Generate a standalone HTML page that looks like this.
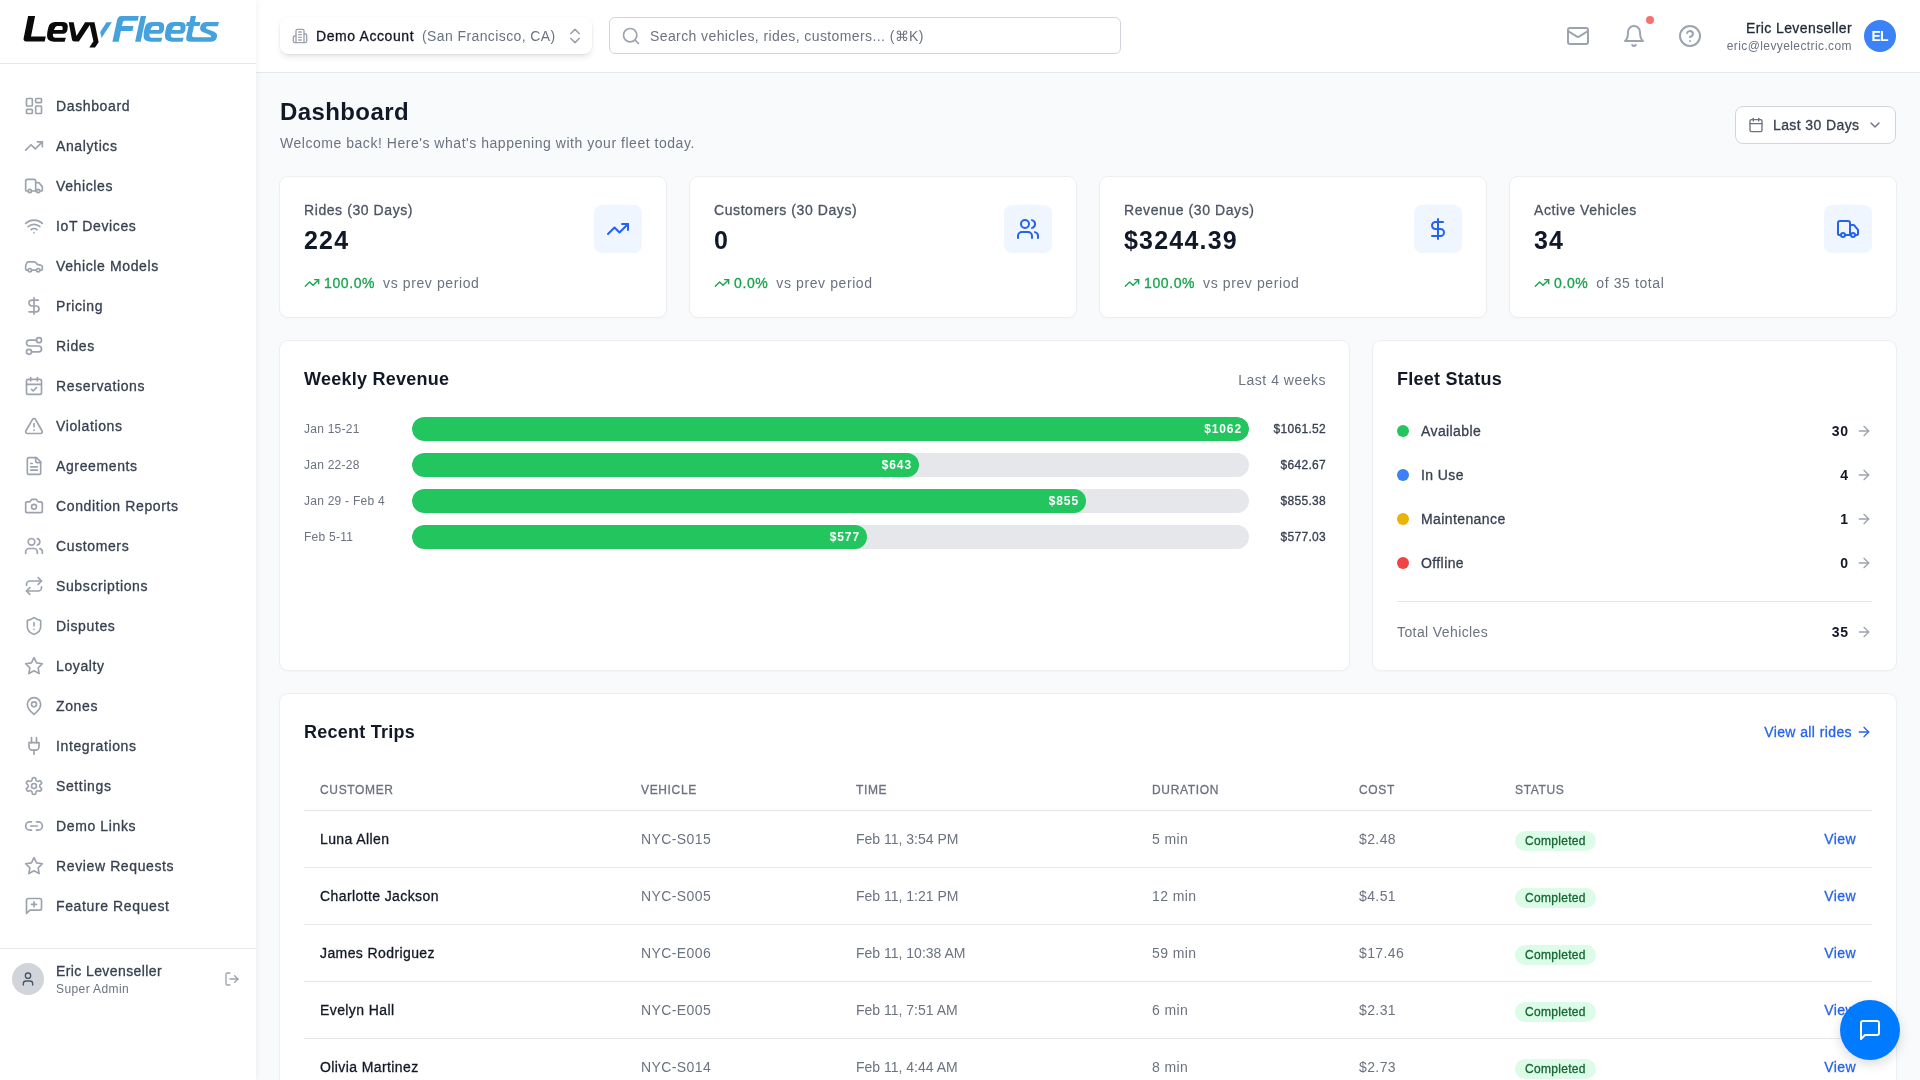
<!DOCTYPE html>
<html><head><meta charset="utf-8">
<style>
*{box-sizing:border-box;margin:0;padding:0}
html,body{width:1920px;height:1080px;overflow:hidden}
body{font-family:"Liberation Sans",sans-serif;background:#f9fafb;color:#111827;position:relative;letter-spacing:0.4px;line-height:1}
.a{position:absolute;white-space:nowrap}
svg.i{fill:none;stroke:currentColor;stroke-linecap:round;stroke-linejoin:round;display:block}
#side{position:absolute;left:0;top:0;width:256px;height:1080px;background:#fff;box-shadow:1px 0 6px rgba(0,0,0,0.06);z-index:3}
#logo{position:absolute;left:0;top:0;width:256px;height:64px;border-bottom:1px solid #e5e7eb}
#nav{position:absolute;top:86px;left:0;width:256px}
.ni{height:40px;display:flex;align-items:center;padding-left:24px;color:#374151;font-size:14px;letter-spacing:0.62px}
.ni svg{width:20px;height:20px;color:#9ca3af;margin-right:12px;flex:none;stroke-width:2}
#suser{position:absolute;left:0;top:948px;width:256px;border-top:1px solid #e5e7eb;height:132px}
#head{position:absolute;left:256px;top:0;width:1664px;height:73px;background:#fff;border-bottom:1px solid #e5e7eb;z-index:2}
.card{position:absolute;background:#fff;border-radius:8px;box-shadow:0 0 0 1px #eceef1,0 1px 3px rgba(0,0,0,0.05)}
.stat .lbl{position:absolute;left:24px;top:26px;font-size:14px;color:#4b5563;white-space:nowrap;letter-spacing:0.58px}
.stat .val{position:absolute;left:24px;top:51px;font-size:25px;font-weight:700;color:#111827;white-space:nowrap;letter-spacing:1.2px}
.stat .box{position:absolute;left:314px;top:28px;width:48px;height:48px;border-radius:8px;background:#eff6ff;color:#2563eb}
.stat .box svg{position:absolute;left:12px;top:12px;width:24px;height:24px;stroke-width:2}
.stat .tr1{position:absolute;left:24px;top:96px;height:20px;display:flex;align-items:center;font-size:14px;white-space:nowrap;letter-spacing:0.6px}
.stat .tr1 svg{width:16px;height:16px;color:#16a34a;stroke-width:2;margin-right:4px}
.stat .pct{color:#16a34a}
.stat .sub{color:#6b7280;margin-left:8px}
.wl{position:absolute;left:24px;font-size:12px;color:#6b7280;white-space:nowrap;letter-spacing:0.25px}
.track{position:absolute;left:132px;width:837px;height:24px;border-radius:12px;background:#e5e7eb;overflow:hidden}
.fill{position:absolute;left:0;top:0;height:24px;border-radius:12px;background:#22c55e}
.fill span{position:absolute;right:7px;top:6px;font-size:12px;font-weight:700;color:#fff;letter-spacing:0.9px}
.wv{position:absolute;right:23px;font-size:12px;color:#374151;white-space:nowrap;letter-spacing:0.3px}
.fr{position:absolute;left:24px;width:475px;height:20px;font-size:14px}
.fr .dot{position:absolute;left:0;top:4px;width:12px;height:12px;border-radius:6px}
.fr .nm{position:absolute;left:24px;top:3px;color:#374151;white-space:nowrap;-webkit-text-stroke:0.3px currentColor}
.fr .ct{position:absolute;right:24px;top:3px;color:#111827;font-weight:700;white-space:nowrap;letter-spacing:0.7px;margin-right:-0.7px}
.fr svg{position:absolute;right:0;top:2px;width:16px;height:16px;color:#9ca3af;stroke-width:2}
.th{position:absolute;top:90px;font-size:12px;color:#6b7280;letter-spacing:0.65px;white-space:nowrap}
.tr{position:absolute;left:24px;width:1568px;height:57px;border-top:1px solid #e5e7eb}
.tr span{position:absolute;top:21px;font-size:14px;white-space:nowrap}
.tr .c1{left:16px;color:#111827}
.tr .c2{left:337px;color:#6b7280}
.tr .c3{left:552px;color:#6b7280;letter-spacing:0}
.tr .c4{left:848px;color:#6b7280}
.tr .c5{left:1055px;color:#6b7280}
.tr .badge{left:1211px;top:20px;height:20px;padding:0 10px;border-radius:10px;background:#dcfce7;color:#166534;font-size:12px;line-height:20px;letter-spacing:0.3px}
.tr .view{right:16px;color:#2563eb}
.m{-webkit-text-stroke:0.3px currentColor}
.ni span{-webkit-text-stroke:0.3px currentColor}
#root{position:absolute;left:0;top:0;width:1920px;height:1080px;will-change:transform;overflow:hidden}
.stat .lbl,.stat .pct,.th,.tr .c1,.tr .badge,.tr .view{-webkit-text-stroke:0.3px currentColor}

</style></head><body>
<div id="root">
<div id="side">
  <div id="logo">
<svg class="a" style="left:0;top:0" width="256" height="63" viewBox="0 0 256 63">
<g fill="#0a0a0a">
<path d="M28.1 16H35.1L31 36.6H45.8L44.7 41.4H26.2Q23.2 41.4 23.6 38.6Z"/>
<path fill-rule="evenodd" d="M47.3 32.5Q48.3 26.7 49.6 24.6Q51.3 22.1 54.8 22.1H62.4Q66.9 22.1 67.6 25.2Q68 27.3 67.4 30Q66.6 33.7 62.9 33.7H52.9Q52.6 37.8 55.4 37.8H65.8L64.6 41.7H53.9Q49.8 41.7 48.1 39.6Q46.6 37.5 47.3 32.5ZM55.4 27.1Q56.3 26 57.6 26H61.1Q62.9 26 62.7 28.4L62.4 29.9H53.9Z"/>
<path d="M68.7 22.2H73.65L76.5 36L85.1 22.2H94.5L98.65 42.3L95 47.5H89.3L93.4 41.3L89.8 25.1L78.85 41.4H75.2Q72.6 41.4 72.1 40.2Z"/>
</g>
<g fill="#46a2dd">
<path d="M106.5 22.2H111.9L101.5 38.1L100.2 31.9Z"/>
<path d="M117.1 19.9Q118.2 16.1 121.2 16.1H138.85L137.75 20.66H124.4Q123.2 20.8 122.8 22.4L121.85 26H133.5L132.55 30.9H120.9L118.7 41.75H112.4Z"/>
<path d="M140.7 16.1H146.1L140.7 41.75H135.1Z"/>
<path id="e1" fill-rule="evenodd" d="M143.8 32.5Q144.8 26.7 146.1 24.6Q147.8 22.1 151.3 22.1H158.9Q163.4 22.1 164.1 25.2Q164.5 27.3 163.9 30Q163.1 33.7 159.4 33.7H149.4Q149.1 37.8 151.9 37.8H162.3L161.1 41.75H150.4Q146.3 41.75 144.6 39.6Q143.1 37.5 143.8 32.5ZM151.9 27.1Q152.8 26 154.1 26H157.6Q159.4 26 159.2 28.4L158.9 29.9H150.4Z"/>
<path fill-rule="evenodd" transform="translate(21.4 0)" d="M143.8 32.5Q144.8 26.7 146.1 24.6Q147.8 22.1 151.3 22.1H158.9Q163.4 22.1 164.1 25.2Q164.5 27.3 163.9 30Q163.1 33.7 159.4 33.7H149.4Q149.1 37.8 151.9 37.8H162.3L161.1 41.75H150.4Q146.3 41.75 144.6 39.6Q143.1 37.5 143.8 32.5ZM151.9 27.1Q152.8 26 154.1 26H157.6Q159.4 26 159.2 28.4L158.9 29.9H150.4Z"/>
<path d="M190.7 16.1H196.05L194.8 22.07H200.5L199.5 26H194L192.1 34.5Q191.6 37.2 194.2 37.2H210.5Q211.5 37.2 210.9 36.2Q210.3 35 209.6 34.7L202.6 32Q199.5 30.5 200.2 27.2Q200.6 25 202 23.6Q203.4 22.07 206 22.07H219L217.8 26.2H207.3Q206.2 26.2 206 27.5Q205.9 28.5 206.9 28.9L213.6 31.6Q217.5 33.2 217 36.5Q216.6 39.3 215 40.6Q213.6 41.7 211.5 41.7H190.5Q186.3 41.7 186.2 38.8Q186.1 37.6 186.5 35.9L188.6 26H186L186.9 22.07H189.5Z"/>
</g>
</svg>
  </div>
  <div id="nav"><div class="ni"><svg class="i" viewBox="0 0 24 24" style="width:20px;height:20px;stroke-width:2"><rect width="7" height="9" x="3" y="3" rx="1"/><rect width="7" height="5" x="14" y="3" rx="1"/><rect width="7" height="9" x="14" y="12" rx="1"/><rect width="7" height="5" x="3" y="16" rx="1"/></svg><span>Dashboard</span></div><div class="ni"><svg class="i" viewBox="0 0 24 24" style="width:20px;height:20px;stroke-width:2"><polyline points="22 7 13.5 15.5 8.5 10.5 2 17"/><polyline points="16 7 22 7 22 13"/></svg><span>Analytics</span></div><div class="ni"><svg class="i" viewBox="0 0 24 24" style="width:20px;height:20px;stroke-width:2"><path d="M14 18V6a2 2 0 0 0-2-2H4a2 2 0 0 0-2 2v11a1 1 0 0 0 1 1h2"/><path d="M15 18H9"/><path d="M19 18h2a1 1 0 0 0 1-1v-3.65a1 1 0 0 0-.22-.624l-3.48-4.35A1 1 0 0 0 17.52 8H14"/><circle cx="17" cy="18" r="2"/><circle cx="7" cy="18" r="2"/></svg><span>Vehicles</span></div><div class="ni"><svg class="i" viewBox="0 0 24 24" style="width:20px;height:20px;stroke-width:2"><path d="M12 20h.01"/><path d="M2 8.82a15 15 0 0 1 20 0"/><path d="M5 12.859a10 10 0 0 1 14 0"/><path d="M8.5 16.429a5 5 0 0 1 7 0"/></svg><span>IoT Devices</span></div><div class="ni"><svg class="i" viewBox="0 0 24 24" style="width:20px;height:20px;stroke-width:2"><path d="M19 17h2c.6 0 1-.4 1-1v-3c0-.9-.7-1.7-1.5-1.9C18.7 10.6 16 10 16 10s-1.3-1.4-2.2-2.3c-.5-.4-1.1-.7-1.8-.7H5c-.6 0-1.1.4-1.4.9l-1.4 2.9A3.7 3.7 0 0 0 2 12v4c0 .6.4 1 1 1h2"/><circle cx="7" cy="17" r="2"/><path d="M9 17h6"/><circle cx="17" cy="17" r="2"/></svg><span>Vehicle Models</span></div><div class="ni"><svg class="i" viewBox="0 0 24 24" style="width:20px;height:20px;stroke-width:2"><line x1="12" x2="12" y1="2" y2="22"/><path d="M17 5H9.5a3.5 3.5 0 0 0 0 7h5a3.5 3.5 0 0 1 0 7H6"/></svg><span>Pricing</span></div><div class="ni"><svg class="i" viewBox="0 0 24 24" style="width:20px;height:20px;stroke-width:2"><circle cx="6" cy="19" r="3"/><path d="M9 19h8.5a3.5 3.5 0 0 0 0-7h-11a3.5 3.5 0 0 1 0-7H15"/><circle cx="18" cy="5" r="3"/></svg><span>Rides</span></div><div class="ni"><svg class="i" viewBox="0 0 24 24" style="width:20px;height:20px;stroke-width:2"><path d="M8 2v4"/><path d="M16 2v4"/><rect width="18" height="18" x="3" y="4" rx="2"/><path d="M3 10h18"/><path d="m9 16 2 2 4-4"/></svg><span>Reservations</span></div><div class="ni"><svg class="i" viewBox="0 0 24 24" style="width:20px;height:20px;stroke-width:2"><path d="m21.73 18-8-14a2 2 0 0 0-3.48 0l-8 14A2 2 0 0 0 4 21h16a2 2 0 0 0 1.73-3"/><path d="M12 9v4"/><path d="M12 17h.01"/></svg><span>Violations</span></div><div class="ni"><svg class="i" viewBox="0 0 24 24" style="width:20px;height:20px;stroke-width:2"><path d="M15 2H6a2 2 0 0 0-2 2v16a2 2 0 0 0 2 2h12a2 2 0 0 0 2-2V7Z"/><path d="M14 2v4a2 2 0 0 0 2 2h4"/><path d="M10 9H8"/><path d="M16 13H8"/><path d="M16 17H8"/></svg><span>Agreements</span></div><div class="ni"><svg class="i" viewBox="0 0 24 24" style="width:20px;height:20px;stroke-width:2"><path d="M14.5 4h-5L7 7H4a2 2 0 0 0-2 2v9a2 2 0 0 0 2 2h16a2 2 0 0 0 2-2V9a2 2 0 0 0-2-2h-3l-2.5-3z"/><circle cx="12" cy="13" r="3"/></svg><span>Condition Reports</span></div><div class="ni"><svg class="i" viewBox="0 0 24 24" style="width:20px;height:20px;stroke-width:2"><path d="M16 21v-2a4 4 0 0 0-4-4H6a4 4 0 0 0-4 4v2"/><circle cx="9" cy="7" r="4"/><path d="M22 21v-2a4 4 0 0 0-3-3.87"/><path d="M16 3.13a4 4 0 0 1 0 7.75"/></svg><span>Customers</span></div><div class="ni"><svg class="i" viewBox="0 0 24 24" style="width:20px;height:20px;stroke-width:2"><path d="m17 2 4 4-4 4"/><path d="M3 11v-1a4 4 0 0 1 4-4h14"/><path d="m7 22-4-4 4-4"/><path d="M21 13v1a4 4 0 0 1-4 4H3"/></svg><span>Subscriptions</span></div><div class="ni"><svg class="i" viewBox="0 0 24 24" style="width:20px;height:20px;stroke-width:2"><path d="M20 13c0 5-3.5 7.5-7.66 8.95a1 1 0 0 1-.67-.01C7.5 20.5 4 18 4 13V6a1 1 0 0 1 1-1c2 0 4.5-1.2 6.24-2.72a1.17 1.17 0 0 1 1.52 0C14.51 3.81 17 5 19 5a1 1 0 0 1 1 1z"/><path d="M12 8v4"/><path d="M12 16h.01"/></svg><span>Disputes</span></div><div class="ni"><svg class="i" viewBox="0 0 24 24" style="width:20px;height:20px;stroke-width:2"><polygon points="12 2 15.09 8.26 22 9.27 17 14.14 18.18 21.02 12 17.77 5.82 21.02 7 14.14 2 9.27 8.91 8.26 12 2"/></svg><span>Loyalty</span></div><div class="ni"><svg class="i" viewBox="0 0 24 24" style="width:20px;height:20px;stroke-width:2"><path d="M20 10c0 6-8 12-8 12s-8-6-8-12a8 8 0 0 1 16 0Z"/><circle cx="12" cy="10" r="3"/></svg><span>Zones</span></div><div class="ni"><svg class="i" viewBox="0 0 24 24" style="width:20px;height:20px;stroke-width:2"><path d="M12 22v-5"/><path d="M9 8V2"/><path d="M15 8V2"/><path d="M18 8v5a4 4 0 0 1-4 4h-4a4 4 0 0 1-4-4V8Z"/></svg><span>Integrations</span></div><div class="ni"><svg class="i" viewBox="0 0 24 24" style="width:20px;height:20px;stroke-width:2"><path d="M12.22 2h-.44a2 2 0 0 0-2 2v.18a2 2 0 0 1-1 1.73l-.43.25a2 2 0 0 1-2 0l-.15-.08a2 2 0 0 0-2.73.73l-.22.38a2 2 0 0 0 .73 2.73l.15.1a2 2 0 0 1 1 1.72v.51a2 2 0 0 1-1 1.74l-.15.09a2 2 0 0 0-.73 2.73l.22.38a2 2 0 0 0 2.73.73l.15-.08a2 2 0 0 1 2 0l.43.25a2 2 0 0 1 1 1.73V20a2 2 0 0 0 2 2h.44a2 2 0 0 0 2-2v-.18a2 2 0 0 1 1-1.73l.43-.25a2 2 0 0 1 2 0l.15.08a2 2 0 0 0 2.73-.73l.22-.39a2 2 0 0 0-.73-2.73l-.15-.08a2 2 0 0 1-1-1.74v-.5a2 2 0 0 1 1-1.74l.15-.09a2 2 0 0 0 .73-2.73l-.22-.38a2 2 0 0 0-2.73-.73l-.15.08a2 2 0 0 1-2 0l-.43-.25a2 2 0 0 1-1-1.73V4a2 2 0 0 0-2-2z"/><circle cx="12" cy="12" r="3"/></svg><span>Settings</span></div><div class="ni"><svg class="i" viewBox="0 0 24 24" style="width:20px;height:20px;stroke-width:2"><path d="M9 17H7A5 5 0 0 1 7 7h2"/><path d="M15 7h2a5 5 0 1 1 0 10h-2"/><line x1="8" x2="16" y1="12" y2="12"/></svg><span>Demo Links</span></div><div class="ni"><svg class="i" viewBox="0 0 24 24" style="width:20px;height:20px;stroke-width:2"><polygon points="12 2 15.09 8.26 22 9.27 17 14.14 18.18 21.02 12 17.77 5.82 21.02 7 14.14 2 9.27 8.91 8.26 12 2"/></svg><span>Review Requests</span></div><div class="ni"><svg class="i" viewBox="0 0 24 24" style="width:20px;height:20px;stroke-width:2"><path d="M21 15a2 2 0 0 1-2 2H7l-4 4V5a2 2 0 0 1 2-2h14a2 2 0 0 1 2 2z"/><path d="M12 7v6"/><path d="M9 10h6"/></svg><span>Feature Request</span></div></div>
  <div id="suser">
    <div class="a" style="left:12px;top:14px;width:32px;height:32px;border-radius:16px;background:#d1d5db"></div>
    <svg class="i" viewBox="0 0 24 24" style="width:16.0px;height:16.0px;position:absolute;left:20px;top:22px;color:#4b5563;stroke-width:2"><path d="M19 21v-2a4 4 0 0 0-4-4H9a4 4 0 0 0-4 4v2"/><circle cx="12" cy="7" r="4"/></svg>
    <span class="a m" style="left:56px;top:15px;font-size:14px;color:#374151">Eric Levenseller</span>
    <span class="a" style="left:56px;top:34px;font-size:12px;color:#6b7280">Super Admin</span>
    <svg class="i" viewBox="0 0 24 24" style="width:16.0px;height:16.0px;position:absolute;left:224px;top:22px;color:#9ca3af;stroke-width:2"><path d="M9 21H5a2 2 0 0 1-2-2V5a2 2 0 0 1 2-2h4"/><polyline points="16 17 21 12 16 7"/><line x1="21" x2="9" y1="12" y2="12"/></svg>
  </div>
</div>
<div id="head">
  <div class="a" style="left:24px;top:17px;width:312px;height:37px;background:#fff;border-radius:8px;box-shadow:0 0 0 1px rgba(0,0,0,0.02),0 4px 6px -1px rgba(0,0,0,0.09),0 2px 4px -2px rgba(0,0,0,0.07)"></div>
  <svg class="i" viewBox="0 0 24 24" style="width:16.0px;height:16.0px;position:absolute;left:36px;top:28px;color:#9ca3af;stroke-width:2"><path d="M6 22V4a2 2 0 0 1 2-2h8a2 2 0 0 1 2 2v18Z"/><path d="M6 12H4a2 2 0 0 0-2 2v6a2 2 0 0 0 2 2h2"/><path d="M18 9h2a2 2 0 0 1 2 2v9a2 2 0 0 1-2 2h-2"/><path d="M10 6h4"/><path d="M10 10h4"/><path d="M10 14h4"/><path d="M10 18h4"/></svg>
  <span class="a m" style="left:60px;top:29px;font-size:14px;color:#111827;letter-spacing:0.6px">Demo Account</span>
  <span class="a" style="left:166px;top:29px;font-size:14px;color:#6b7280">(San Francisco, CA)</span>
  <svg class="i" viewBox="0 0 24 24" style="width:20.0px;height:20.0px;position:absolute;left:309px;top:26px;color:#9ca3af;stroke-width:2"><path d="m7 15 5 5 5-5"/><path d="m7 9 5-5 5 5"/></svg>
  <div class="a" style="left:353px;top:17px;width:512px;height:37px;border:1px solid #d1d5db;border-radius:6px;background:#fff"></div>
  <svg class="i" viewBox="0 0 24 24" style="width:20.0px;height:20.0px;position:absolute;left:365px;top:26px;color:#9ca3af;stroke-width:2"><circle cx="11" cy="11" r="8"/><path d="m21 21-4.3-4.3"/></svg>
  <span class="a" style="left:394px;top:29px;font-size:14px;color:#6b7280">Search vehicles, rides, customers... (⌘K)</span>
  <svg class="i" viewBox="0 0 24 24" style="width:24.0px;height:24.0px;position:absolute;left:1310px;top:24px;color:#9ca3af;stroke-width:2"><rect width="20" height="16" x="2" y="4" rx="2"/><path d="m22 7-8.97 5.7a1.94 1.94 0 0 1-2.06 0L2 7"/></svg>
  <svg class="i" viewBox="0 0 24 24" style="width:24.0px;height:24.0px;position:absolute;left:1366px;top:24px;color:#9ca3af;stroke-width:2"><path d="M6 8a6 6 0 0 1 12 0c0 7 3 9 3 9H3s3-2 3-9"/><path d="M10.3 21a1.94 1.94 0 0 0 3.4 0"/></svg>
  <div class="a" style="left:1390px;top:16px;width:8px;height:8px;border-radius:4px;background:#f87171"></div>
  <svg class="i" viewBox="0 0 24 24" style="width:24.0px;height:24.0px;position:absolute;left:1422px;top:24px;color:#9ca3af;stroke-width:2"><circle cx="12" cy="12" r="10"/><path d="M9.09 9a3 3 0 0 1 5.83 1c0 2-3 3-3 3"/><path d="M12 17h.01"/></svg>
  <span class="a m" style="right:68px;top:21px;font-size:14px;color:#1f2937">Eric Levenseller</span>
  <span class="a" style="right:68px;top:40px;font-size:12px;color:#6b7280">eric@levyelectric.com</span>
  <div class="a" style="left:1608px;top:20px;width:32px;height:32px;border-radius:16px;background:#3b82f6;color:#fff;font-size:14px;font-weight:700;text-align:center;line-height:33px;letter-spacing:-0.9px;text-indent:-0.9px">EL</div>
</div>
<div id="main">
  <span class="a" style="left:280px;top:100px;font-size:24px;font-weight:700;color:#111827;letter-spacing:0.4px">Dashboard</span>
  <span class="a" style="left:280px;top:136px;font-size:14px;color:#6b7280;letter-spacing:0.53px">Welcome back! Here's what's happening with your fleet today.</span>
  <div class="a" style="left:1735px;top:106px;width:161px;height:38px;border:1px solid #d1d5db;border-radius:8px;background:#fff"></div>
  <svg class="i" viewBox="0 0 24 24" style="width:16.0px;height:16.0px;position:absolute;left:1748px;top:117px;color:#6b7280;stroke-width:2"><rect width="18" height="18" x="3" y="4" rx="2" ry="2"/><line x1="16" x2="16" y1="2" y2="6"/><line x1="8" x2="8" y1="2" y2="6"/><line x1="3" x2="21" y1="10" y2="10"/></svg>
  <span class="a m" style="left:1773px;top:118px;font-size:14px;color:#374151">Last 30 Days</span>
  <svg class="i" viewBox="0 0 24 24" style="width:16.0px;height:16.0px;position:absolute;left:1867px;top:117px;color:#6b7280;stroke-width:2"><path d="m6 9 6 6 6-6"/></svg>

  <div class="card stat" style="left:280px;top:177px;width:386px;height:140px">
    <span class="lbl">Rides (30 Days)</span><span class="val">224</span>
    <div class="box"><svg class="i" viewBox="0 0 24 24" style="width:24.0px;height:24.0px;stroke-width:2"><polyline points="22 7 13.5 15.5 8.5 10.5 2 17"/><polyline points="16 7 22 7 22 13"/></svg></div>
    <div class="tr1"><svg class="i" viewBox="0 0 24 24" style="width:16.0px;height:16.0px;stroke-width:2"><polyline points="22 7 13.5 15.5 8.5 10.5 2 17"/><polyline points="16 7 22 7 22 13"/></svg><span class="pct">100.0%</span><span class="sub">vs prev period</span></div>
  </div>
  <div class="card stat" style="left:690px;top:177px;width:386px;height:140px">
    <span class="lbl">Customers (30 Days)</span><span class="val">0</span>
    <div class="box"><svg class="i" viewBox="0 0 24 24" style="width:24.0px;height:24.0px;stroke-width:2"><path d="M16 21v-2a4 4 0 0 0-4-4H6a4 4 0 0 0-4 4v2"/><circle cx="9" cy="7" r="4"/><path d="M22 21v-2a4 4 0 0 0-3-3.87"/><path d="M16 3.13a4 4 0 0 1 0 7.75"/></svg></div>
    <div class="tr1"><svg class="i" viewBox="0 0 24 24" style="width:16.0px;height:16.0px;stroke-width:2"><polyline points="22 7 13.5 15.5 8.5 10.5 2 17"/><polyline points="16 7 22 7 22 13"/></svg><span class="pct">0.0%</span><span class="sub">vs prev period</span></div>
  </div>
  <div class="card stat" style="left:1100px;top:177px;width:386px;height:140px">
    <span class="lbl">Revenue (30 Days)</span><span class="val">$3244.39</span>
    <div class="box"><svg class="i" viewBox="0 0 24 24" style="width:24.0px;height:24.0px;stroke-width:2"><line x1="12" x2="12" y1="2" y2="22"/><path d="M17 5H9.5a3.5 3.5 0 0 0 0 7h5a3.5 3.5 0 0 1 0 7H6"/></svg></div>
    <div class="tr1"><svg class="i" viewBox="0 0 24 24" style="width:16.0px;height:16.0px;stroke-width:2"><polyline points="22 7 13.5 15.5 8.5 10.5 2 17"/><polyline points="16 7 22 7 22 13"/></svg><span class="pct">100.0%</span><span class="sub">vs prev period</span></div>
  </div>
  <div class="card stat" style="left:1510px;top:177px;width:386px;height:140px">
    <span class="lbl">Active Vehicles</span><span class="val">34</span>
    <div class="box"><svg class="i" viewBox="0 0 24 24" style="width:24.0px;height:24.0px;stroke-width:2"><path d="M14 18V6a2 2 0 0 0-2-2H4a2 2 0 0 0-2 2v11a1 1 0 0 0 1 1h2"/><path d="M15 18H9"/><path d="M19 18h2a1 1 0 0 0 1-1v-3.65a1 1 0 0 0-.22-.624l-3.48-4.35A1 1 0 0 0 17.52 8H14"/><circle cx="17" cy="18" r="2"/><circle cx="7" cy="18" r="2"/></svg></div>
    <div class="tr1"><svg class="i" viewBox="0 0 24 24" style="width:16.0px;height:16.0px;stroke-width:2"><polyline points="22 7 13.5 15.5 8.5 10.5 2 17"/><polyline points="16 7 22 7 22 13"/></svg><span class="pct">0.0%</span><span class="sub">of 35 total</span></div>
  </div>

  <div class="card" style="left:280px;top:341px;width:1069px;height:329px">
    <span class="a" style="left:24px;top:29px;font-size:18px;font-weight:700;color:#111827;letter-spacing:0.25px">Weekly Revenue</span>
    <span class="a" style="right:23px;top:32px;font-size:14px;color:#6b7280;letter-spacing:0.5px">Last 4 weeks</span>
    <span class="wl" style="top:82px">Jan 15-21</span>
    <div class="track" style="top:76px"><div class="fill" style="width:837px"><span>$1062</span></div></div>
    <span class="wv m" style="top:82px">$1061.52</span>
    <span class="wl" style="top:118px">Jan 22-28</span>
    <div class="track" style="top:112px"><div class="fill" style="width:507px"><span>$643</span></div></div>
    <span class="wv m" style="top:118px">$642.67</span>
    <span class="wl" style="top:154px">Jan 29 - Feb 4</span>
    <div class="track" style="top:148px"><div class="fill" style="width:674px"><span>$855</span></div></div>
    <span class="wv m" style="top:154px">$855.38</span>
    <span class="wl" style="top:190px">Feb 5-11</span>
    <div class="track" style="top:184px"><div class="fill" style="width:455px"><span>$577</span></div></div>
    <span class="wv m" style="top:190px">$577.03</span>
  </div>

  <div class="card" style="left:1373px;top:341px;width:523px;height:329px">
    <span class="a" style="left:24px;top:29px;font-size:18px;font-weight:700;color:#111827;letter-spacing:0.25px">Fleet Status</span>
    <div class="fr" style="top:80px"><div class="dot" style="background:#22c55e"></div><span class="nm">Available</span><span class="ct">30</span><svg class="i" viewBox="0 0 24 24" style="width:16.0px;height:16.0px;stroke-width:2"><path d="M5 12h14"/><path d="m12 5 7 7-7 7"/></svg></div>
    <div class="fr" style="top:124px"><div class="dot" style="background:#3b82f6"></div><span class="nm">In Use</span><span class="ct">4</span><svg class="i" viewBox="0 0 24 24" style="width:16.0px;height:16.0px;stroke-width:2"><path d="M5 12h14"/><path d="m12 5 7 7-7 7"/></svg></div>
    <div class="fr" style="top:168px"><div class="dot" style="background:#eab308"></div><span class="nm">Maintenance</span><span class="ct">1</span><svg class="i" viewBox="0 0 24 24" style="width:16.0px;height:16.0px;stroke-width:2"><path d="M5 12h14"/><path d="m12 5 7 7-7 7"/></svg></div>
    <div class="fr" style="top:212px"><div class="dot" style="background:#ef4444"></div><span class="nm">Offline</span><span class="ct">0</span><svg class="i" viewBox="0 0 24 24" style="width:16.0px;height:16.0px;stroke-width:2"><path d="M5 12h14"/><path d="m12 5 7 7-7 7"/></svg></div>
    <div class="a" style="left:24px;top:260px;width:475px;height:1px;background:#e5e7eb"></div>
    <div class="fr" style="top:281px"><span class="nm" style="left:0;color:#6b7280;-webkit-text-stroke:0">Total Vehicles</span><span class="ct">35</span><svg class="i" viewBox="0 0 24 24" style="width:16.0px;height:16.0px;stroke-width:2"><path d="M5 12h14"/><path d="m12 5 7 7-7 7"/></svg></div>
  </div>

  <div class="card" style="left:280px;top:694px;width:1616px;height:420px">
    <span class="a" style="left:24px;top:29px;font-size:18px;font-weight:700;color:#111827;letter-spacing:0.25px">Recent Trips</span>
    <span class="a m" style="right:44px;top:31px;font-size:14px;color:#2563eb">View all rides</span>
    <svg class="i" viewBox="0 0 24 24" style="width:16.0px;height:16.0px;position:absolute;left:1576px;top:30px;color:#2563eb;stroke-width:2"><path d="M5 12h14"/><path d="m12 5 7 7-7 7"/></svg>
    <span class="th" style="left:40px">CUSTOMER</span>
    <span class="th" style="left:361px">VEHICLE</span>
    <span class="th" style="left:576px">TIME</span>
    <span class="th" style="left:872px">DURATION</span>
    <span class="th" style="left:1079px">COST</span>
    <span class="th" style="left:1235px">STATUS</span>
    <div class="a" style="left:0;top:116px;width:1616px;height:400px"><div class="tr" style="top:0px"><span class="c1">Luna Allen</span><span class="c2">NYC-S015</span><span class="c3">Feb 11, 3:54 PM</span><span class="c4">5 min</span><span class="c5">$2.48</span><span class="badge">Completed</span><span class="view">View</span></div><div class="tr" style="top:57px"><span class="c1">Charlotte Jackson</span><span class="c2">NYC-S005</span><span class="c3">Feb 11, 1:21 PM</span><span class="c4">12 min</span><span class="c5">$4.51</span><span class="badge">Completed</span><span class="view">View</span></div><div class="tr" style="top:114px"><span class="c1">James Rodriguez</span><span class="c2">NYC-E006</span><span class="c3">Feb 11, 10:38 AM</span><span class="c4">59 min</span><span class="c5">$17.46</span><span class="badge">Completed</span><span class="view">View</span></div><div class="tr" style="top:171px"><span class="c1">Evelyn Hall</span><span class="c2">NYC-E005</span><span class="c3">Feb 11, 7:51 AM</span><span class="c4">6 min</span><span class="c5">$2.31</span><span class="badge">Completed</span><span class="view">View</span></div><div class="tr" style="top:228px"><span class="c1">Olivia Martinez</span><span class="c2">NYC-S014</span><span class="c3">Feb 11, 4:44 AM</span><span class="c4">8 min</span><span class="c5">$2.73</span><span class="badge">Completed</span><span class="view">View</span></div></div>
  </div>
</div>
<div class="a" style="left:1840px;top:1000px;width:60px;height:60px;border-radius:30px;background:#007aff;box-shadow:0 4px 12px rgba(0,0,0,0.15);z-index:5">
  <svg class="i" viewBox="0 0 24 24" style="width:24.0px;height:24.0px;position:absolute;left:18px;top:18px;color:#ffffff;stroke-width:2"><path d="M21 15a2 2 0 0 1-2 2H7l-4 4V5a2 2 0 0 1 2-2h14a2 2 0 0 1 2 2z"/></svg>
</div>

</div>
</body></html>
